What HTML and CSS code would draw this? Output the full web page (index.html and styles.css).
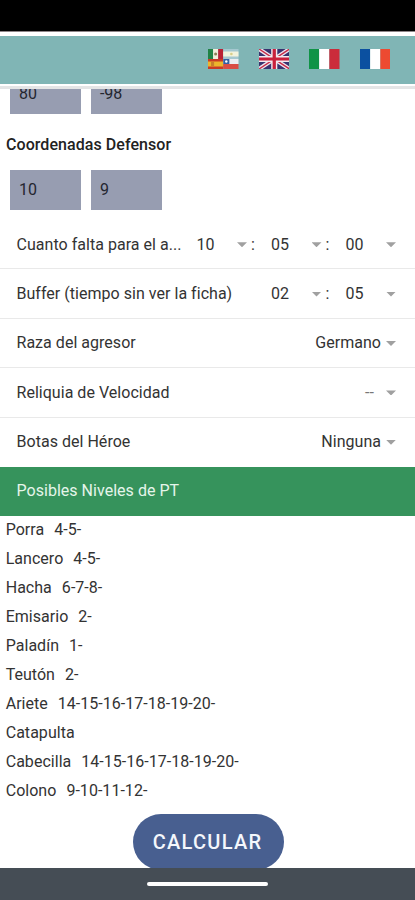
FILE: index.html
```html
<!DOCTYPE html>
<html lang="es">
<head>
<meta charset="utf-8">
<title>Calculadora</title>
<link rel="stylesheet" href="styles.css">
</head>
<body>
<div class="status"></div>
<header class="bar">
  <svg class="flag" viewBox="0 0 30 20" preserveAspectRatio="none"><path fill="#218245" d="M0 0h5v10H0z"/><path fill="#f1eeda" d="M5 0h5v10H5z"/><path fill="#b92235" d="M10 0h5v10h-5z"/><circle cx="7.5" cy="5" r="1.5" fill="#8b8056"/><path fill="#a5c8d0" d="M15 0h15v10H15z"/><path fill="#f3f3dc" d="M15 2.5h15v5H15z"/><circle cx="23" cy="5" r="1.3" fill="#d8cf8a"/><path fill="#c93b26" d="M0 10h15v10H0z"/><path fill="#edb52b" d="M0 12.5h15v5H0z"/><path fill="#c9802a" d="M3 13h3v4H3z"/><path fill="#eceef1" d="M15 10h15v5H15z"/><path fill="#3260a4" d="M15 10h6v5h-6z"/><path fill="#d94d44" d="M15 15h15v5H15z"/><circle cx="18" cy="12.5" r="1.2" fill="#fff"/></svg>
  <svg class="flag" viewBox="0 0 30 20" preserveAspectRatio="none"><path fill="#39336f" d="M0 0h30v20H0z"/><path stroke="#eee5ee" stroke-width="4" d="m0 0 30 20M30 0 0 20"/><path stroke="#c82c48" stroke-width="1.4" d="m0 0 30 20M30 0 0 20"/><path stroke="#f3e9ef" stroke-width="6" d="M15 0v20M0 10h30"/><path stroke="#c91f3c" stroke-width="3.2" d="M15 0v20M0 10h30"/></svg>
  <svg class="flag" viewBox="0 0 30 20" preserveAspectRatio="none"><path fill="#109347" d="M0 0h10v20H0z"/><path fill="#fff" d="M10 0h10v20H10z"/><path fill="#cb2c3b" d="M20 0h10v20H20z"/></svg>
  <svg class="flag" viewBox="0 0 30 20" preserveAspectRatio="none"><path fill="#0b50a0" d="M0 0h10v20H0z"/><path fill="#fff" d="M10 0h10v20H10z"/><path fill="#ed4a31" d="M20 0h10v20H20z"/></svg>
</header>
<main class="content">
  <div class="coords coords-clipped"><div class="field">80</div><div class="field">-98</div></div>
  <h2 class="title">Coordenadas Defensor</h2>
  <div class="coords"><div class="field">10</div><div class="field">9</div></div>
  <div class="rows">
    <div class="row"><span class="label">Cuanto falta para el a...</span><span class="pick">10<i class="caret"></i></span><span class="colon">:</span><span class="pick">05<i class="caret"></i></span><span class="colon">:</span><span class="pick">00<i class="caret"></i></span></div>
    <div class="row"><span class="label">Buffer (tiempo sin ver la ficha)</span><span class="pick">02<i class="caret"></i></span><span class="colon">:</span><span class="pick">05<i class="caret"></i></span></div>
    <div class="row"><span class="label">Raza del agresor</span><span class="value">Germano</span><i class="caret"></i></div>
    <div class="row"><span class="label">Reliquia de Velocidad</span><span class="value none">--</span><i class="caret"></i></div>
    <div class="row"><span class="label">Botas del Héroe</span><span class="value">Ninguna</span><i class="caret"></i></div>
  </div>
  <div class="banner">Posibles Niveles de PT</div>
  <ul class="levels">
    <li><span>Porra</span><span>4-5-</span></li>
    <li><span>Lancero</span><span>4-5-</span></li>
    <li><span>Hacha</span><span>6-7-8-</span></li>
    <li><span>Emisario</span><span>2-</span></li>
    <li><span>Paladín</span><span>1-</span></li>
    <li><span>Teutón</span><span>2-</span></li>
    <li><span>Ariete</span><span>14-15-16-17-18-19-20-</span></li>
    <li><span>Catapulta</span></li>
    <li><span>Cabecilla</span><span>14-15-16-17-18-19-20-</span></li>
    <li><span>Colono</span><span>9-10-11-12-</span></li>
  </ul>
  <button class="calc">CALCULAR</button>
</main>
<footer class="nav"><div class="handle"></div></footer>
</body>
</html>
```

FILE: styles.css
```css
* { box-sizing: border-box; }
body {
  margin: 0;
  height: 900px;
  display: flex;
  flex-direction: column;
  overflow: hidden;
  background: #fff;
  color: #333;
  font: 16px/20px Roboto, sans-serif;
  letter-spacing: 0.03px;
}
.status { height: 32px; flex: none; background: #000; border-bottom: 1px solid #8d8588; }
.bar {
  height: 48px;
  flex: none;
  margin-top: 4px;
  padding: 13px 25px 0 0;
  display: flex;
  justify-content: flex-end;
  gap: 20px;
  background: #80b5b5;
}
.flag { width: 30.5px; height: 20px; }
.content {
  height: 782px;
  flex: none;
  margin-top: 2px;
  border-top: 3px solid #e4e5e6;
  overflow: hidden;
  display: flex;
  flex-direction: column;
}
.coords { display: flex; flex: none; gap: 10px; padding-left: 10.4px; }
.coords-clipped { margin-top: -15px; }
.field { width: 71px; height: 40px; padding: 10px 8.5px; background: #979db1; color: #24262f; }
.title { margin: 21px 0 15px 6px; font-size: 16px; font-weight: 500; line-height: 20px; letter-spacing: 0.06px; color: #222; }
.rows { height: 247px; flex: none; margin-top: 10px; display: grid; grid-template-rows: repeat(5, 1fr); }
.row { display: flex; align-items: center; padding: 1px 19px 0 16.5px; border-bottom: 1px solid #e9e9e9; }
.row:last-child { padding-top: 0; border-bottom: 0; }
.label { flex: 1; white-space: nowrap; }
.pick { width: 50.5px; display: flex; align-items: center; justify-content: space-between; }
.colon { width: 24px; padding-left: 4px; }
.caret { flex: none; width: 10px; height: 5px; background: #a0a0a0; clip-path: polygon(0 0, 100% 0, 50% 100%); }
.value { margin-right: 5px; }
.none { margin-right: 12px; color: #777; }
.banner { height: 48.5px; flex: none; padding: 14px 16.5px; background: #36935c; color: #e5f5ea; }
.levels { margin: 0; padding: 0.9px 5.7px 0; list-style: none; font-size: 16px; }
.levels li { display: flex; gap: 10px; height: 28.95px; line-height: 28.95px; }
.calc {
  width: 151px;
  height: 56px;
  flex: none;
  align-self: center;
  margin: 8px 0 0 2px;
  padding: 1px 2px 0 0;
  border: 0;
  border-radius: 28px;
  background: #485f90;
  color: #f4f7fc;
  font: 500 20px/55px Roboto, sans-serif;
  letter-spacing: 1.25px;
}
.nav { height: 32px; flex: none; padding-top: 14px; background: #454d55; }
.handle { width: 121px; height: 4px; margin: 0 auto; border-radius: 2px; background: #fff; }
```
